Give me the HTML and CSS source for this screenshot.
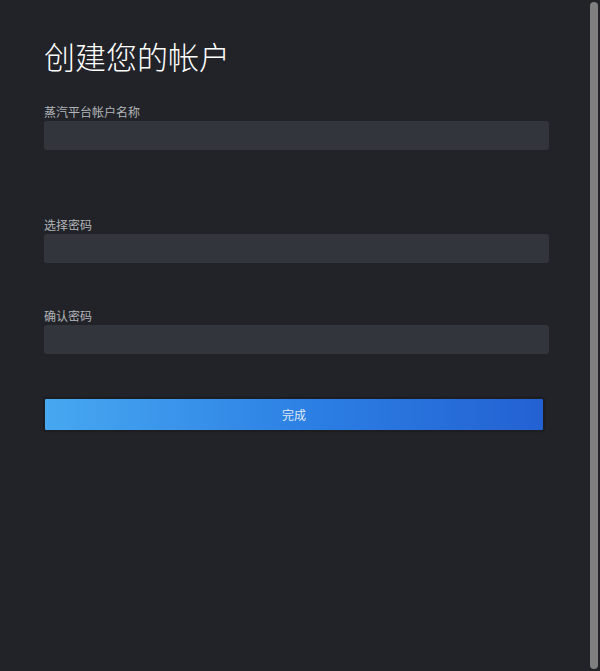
FILE: index.html
```html
<!DOCTYPE html>
<html lang="zh-CN">
<head>
<meta charset="utf-8">
<title>创建您的帐户</title>
<link rel="stylesheet" href="styles.css">
</head>
<body>
<main class="page">
  <h1 class="title">创建您的帐户</h1>
  <form class="form">
    <div class="field field-name">
      <label class="label">蒸汽平台帐户名称</label>
      <input class="input" type="text">
    </div>
    <div class="field field-pass">
      <label class="label">选择密码</label>
      <input class="input" type="password">
    </div>
    <div class="field field-confirm">
      <label class="label">确认密码</label>
      <input class="input" type="password">
    </div>
    <button class="submit" type="button">完成</button>
  </form>
</main>
<div class="scrollbar"></div>
</body>
</html>
```
FILE: styles.css
```css
html, body {
  margin: 0;
  padding: 0;
  height: 100%;
  background: #212328;
  overflow: hidden;
}
body {
  font-family: "Noto Sans CJK SC", "Noto Sans", sans-serif;
  color: #ffffff;
}
.page {
  padding: 34px 51px 0 44px;
}
.title {
  margin: 0;
  font-size: 31px;
  font-weight: 300;
  line-height: 44px;
  color: #ffffff;
}
.form {
  display: flex;
  flex-direction: column;
  margin-top: 26px;
}
.field {
  display: flex;
  flex-direction: column;
}
.label {
  font-size: 12px;
  line-height: 16px;
  color: #b2b5b9;
  height: 14px;
}
.input {
  box-sizing: border-box;
  height: 29px;
  margin-top: 3px;
  border: none;
  border-radius: 3px;
  background: #32353c;
  outline: none;
}
.field-name { margin-bottom: 67px; }
.field-pass { margin-bottom: 45px; }
.submit {
  box-sizing: border-box;
  margin-top: 44px;
  width: 500px;
  height: 33px;
  border: 1px solid #1c1e22;
  border-radius: 2px;
  background: linear-gradient(90deg, #47a8f1 0%, #2b7ee3 55%, #2361d2 100%);
  box-shadow: 0 0 2px rgba(0,0,0,0.6);
  color: #dfe8f2;
  font-family: "Noto Sans CJK SC", sans-serif;
  font-size: 12px;
  padding: 0;
}
.scrollbar {
  position: fixed;
  top: 2px;
  bottom: 2px;
  right: 2px;
  width: 8px;
  border-radius: 4px;
  background: #7f7f7f;
}
```
